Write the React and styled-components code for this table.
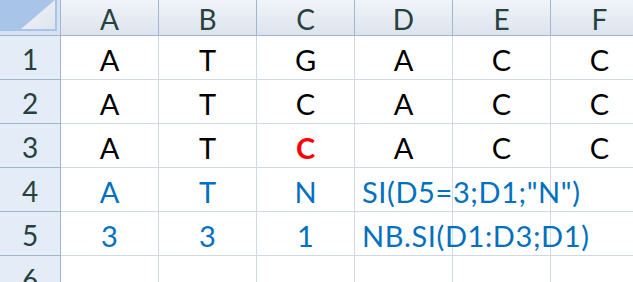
import React from 'react';
import styled, { createGlobalStyle } from 'styled-components';

const columns = ['A', 'B', 'C', 'D', 'E', 'F'];

const rows = [
  { n: 1, cells: [{ v: 'A' }, { v: 'T' }, { v: 'G' }, { v: 'A' }, { v: 'C' }, { v: 'C' }] },
  { n: 2, cells: [{ v: 'A' }, { v: 'T' }, { v: 'C' }, { v: 'A' }, { v: 'C' }, { v: 'C' }] },
  { n: 3, cells: [{ v: 'A' }, { v: 'T' }, { v: 'C', tone: 'alert' }, { v: 'A' }, { v: 'C' }, { v: 'C' }] },
  {
    n: 4,
    cells: [
      { v: 'A', tone: 'formula' },
      { v: 'T', tone: 'formula' },
      { v: 'N', tone: 'formula' },
      { v: 'SI(D5=3;D1;"N")', tone: 'formula', spill: true },
      { v: '' },
      { v: '' }
    ]
  },
  {
    n: 5,
    cells: [
      { v: '3', tone: 'formula' },
      { v: '3', tone: 'formula' },
      { v: '1', tone: 'formula' },
      { v: 'NB.SI(D1:D3;D1)', tone: 'formula', spill: true },
      { v: '' },
      { v: '' }
    ]
  },
  { n: 6, cells: [{ v: '' }, { v: '' }, { v: '' }, { v: '' }, { v: '' }, { v: '' }] }
];

const colors = {
  text: '#000000',
  formula: '#0070c0',
  alert: '#ff0000'
};

function Corner() {
  return (
    <CornerCell>
      <CornerMark />
    </CornerCell>
  );
}

function Sheet() {
  return (
    <Grid>
      <Corner />
      {columns.map(c => (
        <ColHead key={c}>{c}</ColHead>
      ))}
      {rows.map(row => (
        <React.Fragment key={row.n}>
          <RowHead>{row.n}</RowHead>
          {row.cells.map((cell, i) => (
            <Cell key={i} tone={cell.tone} spill={cell.spill}>
              {cell.v}
            </Cell>
          ))}
        </React.Fragment>
      ))}
    </Grid>
  );
}

export default function App() {
  return (
    <>
      <GlobalStyle />
      <Sheet />
    </>
  );
}

const GlobalStyle = createGlobalStyle`
  html, body {
    margin: 0;
    padding: 0;
    background: #ffffff;
    overflow: hidden;
  }
`;

const Grid = styled.div`
  display: grid;
  grid-template-columns: 61px repeat(6, 98px);
  grid-template-rows: 36px repeat(6, 44px);
  width: 633px;
  height: 282px;
  overflow: hidden;
  font-family: Lato, 'Open Sans', sans-serif;
  font-size: 28px;
`;

const CornerCell = styled.div`
  position: relative;
  box-sizing: border-box;
  background: #d6e1f1;
  border-right: 1px solid #9eb6ce;
  border-bottom: 1px solid #9eb6ce;
  overflow: hidden;
`;

const CornerMark = styled.div`
  position: absolute;
  left: 0;
  top: 0;
  width: 57px;
  height: 31px;
  background: #a9c4e9;

  &:after {
    position: absolute;
    right: 2px;
    bottom: 2px;
    width: 34px;
    height: 29px;
    background: linear-gradient(135deg, #f4f6fa 0%, #dfe4ec 100%);
    clip-path: polygon(100% 0, 100% 100%, 0 100%);
    content: '';
  }
`;

const ColHead = styled.div`
  box-sizing: border-box;
  display: flex;
  align-items: center;
  justify-content: center;
  padding-top: 2px;
  background: linear-gradient(#f1f4f9, #dce3ed);
  border-right: 1px solid #9eb6ce;
  border-bottom: 1px solid #9eb6ce;
  color: #27413e;
`;

const RowHead = styled.div`
  box-sizing: border-box;
  display: flex;
  align-items: center;
  justify-content: center;
  padding-top: 3px;
  background: #e4ecf7;
  border-right: 1px solid #9eb6ce;
  border-bottom: 1px solid #9eb6ce;
  color: #27413e;
`;

const Cell = styled.div`
  box-sizing: border-box;
  display: flex;
  align-items: center;
  justify-content: ${props => (props.spill ? 'flex-start' : 'center')};
  padding-top: 4px;
  padding-left: ${props => (props.spill ? '7px' : '0')};
  border-right: 1px solid #d0d7e5;
  border-bottom: 1px solid #d0d7e5;
  color: ${props => colors[props.tone] || colors.text};
  font-size: 29px;
  font-weight: ${props => (props.tone === 'alert' ? 700 : 400)};
  letter-spacing: ${props => (props.spill ? '0.6px' : '0')};
  white-space: nowrap;
  overflow: visible;
  position: relative;
  z-index: ${props => (props.spill ? 1 : 0)};
`;
